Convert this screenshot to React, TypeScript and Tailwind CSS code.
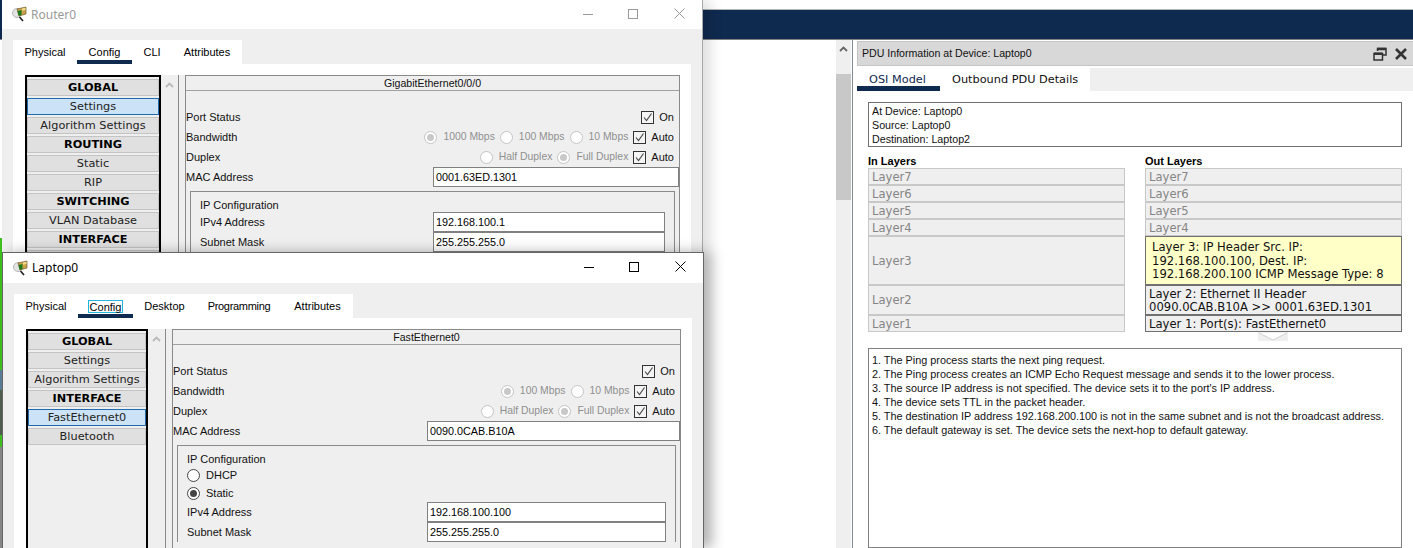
import type { ReactNode } from 'react';

const tahoma = "font-['Liberation_Sans',sans-serif]";
const verdana = "font-['DejaVu_Sans',sans-serif]";

interface TabItem {
  label: string;
  width: string;
  active?: boolean;
}

interface SideItem {
  label: string;
  head?: boolean;
  selected?: boolean;
}

const routerTabs: TabItem[] = [
  { label: 'Physical', width: 'w-[64px]' },
  { label: 'Config', width: 'w-[55px]', active: true },
  { label: 'CLI', width: 'w-[40px]' },
  { label: 'Attributes', width: 'w-[70px]' },
];

const laptopTabs: TabItem[] = [
  { label: 'Physical', width: 'w-[64px]' },
  { label: 'Config', width: 'w-[55px]', active: true },
  { label: 'Desktop', width: 'w-[63px]' },
  { label: 'Programming', width: 'w-[86px] tracking-[-0.3px]' },
  { label: 'Attributes', width: 'w-[71px]' },
];

const routerSide: SideItem[] = [
  { label: 'GLOBAL', head: true },
  { label: 'Settings', selected: true },
  { label: 'Algorithm Settings' },
  { label: 'ROUTING', head: true },
  { label: 'Static' },
  { label: 'RIP' },
  { label: 'SWITCHING', head: true },
  { label: 'VLAN Database' },
  { label: 'INTERFACE', head: true },
  { label: '' }, // next row is hidden behind the laptop window
];

const laptopSide: SideItem[] = [
  { label: 'GLOBAL', head: true },
  { label: 'Settings' },
  { label: 'Algorithm Settings' },
  { label: 'INTERFACE', head: true },
  { label: 'FastEthernet0', selected: true },
  { label: 'Bluetooth' },
];

const DeviceIcon = () => (
  <svg width="17" height="17" viewBox="0 0 17 17">
    <circle cx="6" cy="7" r="4.5" fill="#e4e4e4" stroke="#b8b8b8" />
    <path d="M8.5 11 L12 15" stroke="#222" strokeWidth="1.6" />
    <path d="M6 3 L15 1 V8 L8 10 Z" fill="#c9a24a" stroke="#5c4a1e" strokeWidth="0.6" />
    <path d="M6.5 5 L10.5 4 V9 L7.5 9.8 Z" fill="#1d7a1d" />
    <path d="M11 2.5 L14.5 1.8 V4 L11 4.8 Z" fill="#efd98a" />
  </svg>
);

const Chevron = () => (
  <svg width="9" height="6" viewBox="0 0 9 6" className="block">
    <path d="M1 5 L4.5 1.5 L8 5" fill="none" stroke="#b9b9b9" strokeWidth="1.8" />
  </svg>
);

const CheckBox = ({ className = '' }: { className?: string }) => (
  <span className={`flex h-[13px] w-[13px] items-center justify-center border border-[#333] bg-[#f4f4f4] ${className}`}>
    <svg width="11" height="11" viewBox="0 0 11 11">
      <path d="M2 5.5 L4.5 8.5 L9.5 1.5" fill="none" stroke="#444" strokeWidth="1.1" />
    </svg>
  </span>
);

const Radio = ({ on, disabled, className = '' }: { on?: boolean; disabled?: boolean; className?: string }) => (
  <span
    className={`flex h-[13px] w-[13px] items-center justify-center rounded-full border bg-white ${
      disabled ? 'border-[#c4c4c4]' : 'border-[#444]'
    } ${className}`}
  >
    {on && <span className={`h-[7px] w-[7px] rounded-full ${disabled ? 'bg-[#c8c8c8]' : 'bg-[#444]'}`} />}
  </span>
);

const Muted = ({ children, className = '' }: { children: ReactNode; className?: string }) => (
  <span className={`text-[10.4px] text-[#8f8f8f] ${className}`}>{children}</span>
);

const TextField = ({ value, className }: { value: string; className: string }) => (
  <div className={`flex items-center border border-[#808080] bg-white pl-[2px] text-[10.8px] text-black ${className}`}>
    {value}
  </div>
);

const Row = ({ label, children }: { label: string; children?: ReactNode }) => (
  <div className="flex h-[20px] items-center justify-between">
    <span>{label}</span>
    {children}
  </div>
);

interface WindowProps {
  title: string;
  inactive?: boolean;
  tabs: TabItem[];
  side: SideItem[];
  sideWidth: string;
  panelTitle: string;
  panelWidth: string;
  headerHeight: string;
  frame: string;
  children: ReactNode;
}

const DeviceWindow = ({
  title,
  inactive,
  tabs,
  side,
  sideWidth,
  panelTitle,
  panelWidth,
  headerHeight,
  frame,
  children,
}: WindowProps) => (
  <section className={`absolute flex flex-col overflow-hidden bg-[#efefef] ${frame}`}>
    <header className={`flex shrink-0 items-center justify-between bg-white pb-[2px] pl-[9px] ${headerHeight}`}>
      <div className="mt-[2px] flex items-center gap-[3px]">
        <DeviceIcon />
        <span className={`font-['Noto_Sans',sans-serif] text-[12px] ${inactive ? 'text-[#999]' : 'text-black'}`}>{title}</span>
      </div>
      <div className={`flex items-center ${inactive ? 'text-[#999]' : 'text-black'}`}>
        <svg width="45" height="12" viewBox="0 0 45 12">
          <path d="M0 6.5 H10" stroke="currentColor" />
        </svg>
        <svg width="46" height="12" viewBox="0 0 46 12">
          <rect x="0.5" y="1.5" width="9" height="9" fill="none" stroke="currentColor" />
        </svg>
        <svg width="28" height="12" viewBox="0 0 28 12">
          <path d="M0.5 0.5 L10.5 10.5 M10.5 0.5 L0.5 10.5" stroke="currentColor" />
        </svg>
      </div>
    </header>
    <div className="flex min-h-0 flex-1 flex-col px-[11px] pt-[11px]">
      <nav className="flex h-[24px] shrink-0">
        {tabs.map((tab) => (
          <div
            key={tab.label}
            className={`relative flex justify-center bg-white pt-[6px] text-[11px] text-black ${tahoma} ${tab.width}`}
          >
            <span
              className={`h-[13px] leading-[12px] ${
                !inactive && tab.active ? 'border border-[#22b5e0] px-[1px]' : ''
              }`}
            >
              {tab.label}
            </span>
            {tab.active && <span className="absolute inset-x-0 bottom-0 h-[4px] bg-[#0f2a4f]" />}
          </div>
        ))}
      </nav>
      <div className="min-h-0 flex-1 bg-white px-[12px] pt-[11px]">
        <div className={`flex h-full gap-[6px] bg-[#efefef] ${tahoma}`}>
          <div className="flex shrink-0">
            <div className={`flex flex-col gap-[2px] border-x-2 border-t-2 border-x-black border-t-black bg-[#efefef] pt-[2px] ${verdana} ${sideWidth}`}>
              {side.map((item, index) => (
                <div
                  key={item.label + index}
                  className={`flex h-[17px] shrink-0 items-center justify-center border text-[11.3px] leading-none text-[#222] ${
                    item.selected ? 'border-[#1f6bad] bg-[#cce2f6]' : 'border-[#c4c4c4] bg-[#e0e0e0]'
                  } ${item.head ? 'font-bold text-black' : ''}`}
                >
                  {item.label}
                </div>
              ))}
            </div>
            <div className="flex w-[18px] justify-center border-r border-[#8a8a8a] bg-[#efefef] pt-[7px]">
              <Chevron />
            </div>
          </div>
          <div className={`flex shrink-0 flex-col border-x border-t border-[#8a8a8a] text-[11px] text-[#111] ${panelWidth}`}>
            <div className="flex h-[15px] shrink-0 items-center justify-center border-b border-[#a0a0a0] pt-px text-[10.6px]">
              {panelTitle}
            </div>
            {children}
          </div>
        </div>
      </div>
    </div>
  </section>
);

const RouterForm = () => (
  <div className="flex flex-col pt-[16px]">
    <Row label="Port Status">
      <div className="flex items-center gap-[5px] pr-[5px]">
        <CheckBox />
        <span>On</span>
      </div>
    </Row>
    <Row label="Bandwidth">
      <div className="flex items-center pr-[5px]">
        <Radio on disabled />
        <Muted className="ml-[6px]">1000 Mbps</Muted>
        <Radio disabled className="ml-[5px]" />
        <Muted className="ml-[6px]">100 Mbps</Muted>
        <Radio disabled className="ml-[5px]" />
        <Muted className="ml-[6px]">10 Mbps</Muted>
        <CheckBox className="ml-[5px]" />
        <span className="ml-[5px]">Auto</span>
      </div>
    </Row>
    <Row label="Duplex">
      <div className="flex items-center pr-[5px]">
        <Radio disabled />
        <Muted className="ml-[6px]">Half Duplex</Muted>
        <Radio on disabled className="ml-[5px]" />
        <Muted className="ml-[6px]">Full Duplex</Muted>
        <CheckBox className="ml-[5px]" />
        <span className="ml-[5px]">Auto</span>
      </div>
    </Row>
    <Row label="MAC Address">
      <TextField value="0001.63ED.1301" className="h-[20px] w-[246px]" />
    </Row>
    <div className="mx-[4px] mt-[4px] border-x border-t border-[#8a8a8a] px-[9px] pt-[6px]">
      <div className="flex h-[14px] items-center">IP Configuration</div>
      <div className="flex h-[20px] items-center justify-between">
        <span>IPv4 Address</span>
        <TextField value="192.168.100.1" className="h-[20px] w-[232px]" />
      </div>
      <div className="flex h-[20px] items-center justify-between">
        <span>Subnet Mask</span>
        <TextField value="255.255.255.0" className="h-[20px] w-[232px]" />
      </div>
    </div>
  </div>
);

const LaptopForm = () => (
  <div className="flex flex-col pt-[16px]">
    <Row label="Port Status">
      <div className="flex items-center gap-[5px] pr-[5px]">
        <CheckBox />
        <span>On</span>
      </div>
    </Row>
    <Row label="Bandwidth">
      <div className="flex items-center pr-[5px]">
        <Radio on disabled />
        <Muted className="ml-[6px]">100 Mbps</Muted>
        <Radio disabled className="ml-[5px]" />
        <Muted className="ml-[6px]">10 Mbps</Muted>
        <CheckBox className="ml-[5px]" />
        <span className="ml-[5px]">Auto</span>
      </div>
    </Row>
    <Row label="Duplex">
      <div className="flex items-center pr-[5px]">
        <Radio disabled />
        <Muted className="ml-[6px]">Half Duplex</Muted>
        <Radio on disabled className="ml-[5px]" />
        <Muted className="ml-[6px]">Full Duplex</Muted>
        <CheckBox className="ml-[5px]" />
        <span className="ml-[5px]">Auto</span>
      </div>
    </Row>
    <Row label="MAC Address">
      <TextField value="0090.0CAB.B10A" className="h-[20px] w-[253px]" />
    </Row>
    <div className="mx-[4px] mt-[4px] border-x border-t border-[#8a8a8a] px-[9px] pt-[6px]">
      <div className="flex h-[14px] items-center">IP Configuration</div>
      <div className="flex h-[18px] items-center gap-[6px]">
        <Radio />
        <span>DHCP</span>
      </div>
      <div className="flex h-[18px] items-center gap-[6px]">
        <Radio on />
        <span>Static</span>
      </div>
      <div className="flex h-[20px] items-center justify-between">
        <span>IPv4 Address</span>
        <TextField value="192.168.100.100" className="h-[20px] w-[239px]" />
      </div>
      <div className="flex h-[20px] items-center justify-between">
        <span>Subnet Mask</span>
        <TextField value="255.255.255.0" className="h-[20px] w-[239px]" />
      </div>
    </div>
  </div>
);

const LayerCell = ({ height, children, active, yellow }: { height: string; children: ReactNode; active?: boolean; yellow?: boolean }) => (
  <div
    className={`flex shrink-0 items-center border pt-[2px] leading-[13.5px] ${height} ${
      yellow
        ? 'border-[#707070] bg-[#ffffc8] px-[6px] text-[#111]'
        : active
          ? 'border-[#707070] bg-[#efefef] px-[3px] text-[#111]'
          : 'border-[#c8c8c8] bg-[#efefef] px-[3px] text-[#858585]'
    }`}
  >
    <div>{children}</div>
  </div>
);

const inactiveUpper = ['Layer7', 'Layer6', 'Layer5', 'Layer4'];

const LayerColumn = ({ title, children }: { title: string; children: ReactNode }) => (
  <div className="flex w-[257px] flex-col">
    <div className={`h-[14px] text-[11px] font-bold leading-[14px] text-black ${tahoma}`}>{title}</div>
    <div className={`flex flex-col text-[11.6px] ${verdana}`}>
      {inactiveUpper.map((name) => (
        <LayerCell key={name} height="h-[17px]">
          {name}
        </LayerCell>
      ))}
      {children}
    </div>
  </div>
);

const PduPanel = () => (
  <aside className="flex min-w-0 flex-1 flex-col pl-[4px] pt-px">
    <div className={`flex h-[25px] shrink-0 items-center justify-between border-y border-l border-[#c4c4c4] bg-[#d8d8d8] pl-[4px] pr-[5px] text-[#111] ${tahoma}`}>
      <span className="pt-px text-[10.6px]">PDU Information at Device: Laptop0</span>
      <div className="flex items-center gap-[7px]">
        <svg width="14" height="14" viewBox="0 0 14 14">
          <path d="M4.5 4 V1.5 H13 V8 H10 M1 6.5 H9.5 V13 H1 Z" fill="none" stroke="#333" strokeWidth="1.5" />
          <path d="M4 2 H13 M1 6.8 H9.5" stroke="#333" strokeWidth="2.4" />
        </svg>
        <svg width="14" height="14" viewBox="0 0 14 14">
          <path d="M2 2 L12 12 M12 2 L2 12" stroke="#333" strokeWidth="2.6" />
        </svg>
      </div>
    </div>
    <div className="flex min-h-0 flex-1 flex-col bg-white">
      <div className={`mt-[2px] flex h-[23px] shrink-0 bg-[#efefef] text-[11.3px] text-[#111] ${verdana}`}>
        <div className="relative w-[83px] bg-white pl-[12px] pt-[4px] text-[#0f2a4f]">
          OSI Model
          <span className="absolute inset-x-0 bottom-0 h-[5px] bg-[#0f2a4f]" />
        </div>
        <div className="w-[150px] bg-white pl-[12px] pt-[4px]">Outbound PDU Details</div>
      </div>
      <div className="flex min-h-0 flex-1 flex-col pl-[11px] pr-[11px] pt-[11px]">
        <div className={`h-[45px] shrink-0 border border-[#707070] px-[3px] py-[1px] text-[10.7px] leading-[14px] text-[#111] ${tahoma}`}>
          <div>At Device: Laptop0</div>
          <div>Source: Laptop0</div>
          <div>Destination: Laptop2</div>
        </div>
        <div className="mt-[7px] flex shrink-0 justify-between">
          <LayerColumn title="In Layers">
            <LayerCell height="h-[49px]">Layer3</LayerCell>
            <LayerCell height="h-[30px]">Layer2</LayerCell>
            <LayerCell height="h-[17px]">Layer1</LayerCell>
          </LayerColumn>
          <LayerColumn title="Out Layers">
            <LayerCell height="h-[49px]" yellow>
              Layer 3: IP Header Src. IP:
              <br />
              192.168.100.100, Dest. IP:
              <br />
              192.168.200.100 ICMP Message Type: 8
            </LayerCell>
            <LayerCell height="h-[30px]" active>
              Layer 2: Ethernet II Header
              <br />
              0090.0CAB.B10A &gt;&gt; 0001.63ED.1301
            </LayerCell>
            <LayerCell height="h-[17px]" active>
              Layer 1: Port(s): FastEthernet0
            </LayerCell>
          </LayerColumn>
        </div>
        <div className="flex h-[16px] shrink-0 justify-end pr-[114px]">
          <svg width="30" height="10" viewBox="0 0 30 10">
            <rect width="30" height="9" fill="#efefef" />
            <path d="M1 1 L15 8 L29 1" fill="#fff" stroke="#d0d0d0" />
          </svg>
        </div>
        <div className={`min-h-0 flex-1 border border-[#808080] px-[3px] pt-[4px] text-[10.85px] leading-[14px] text-[#111] ${tahoma}`}>
          <div>1. The Ping process starts the next ping request.</div>
          <div>2. The Ping process creates an ICMP Echo Request message and sends it to the lower process.</div>
          <div>3. The source IP address is not specified. The device sets it to the port's IP address.</div>
          <div>4. The device sets TTL in the packet header.</div>
          <div>5. The destination IP address 192.168.200.100 is not in the same subnet and is not the broadcast address.</div>
          <div>6. The default gateway is set. The device sets the next-hop to default gateway.</div>
        </div>
      </div>
    </div>
  </aside>
);

export default function App() {
  return (
    <div className="relative flex h-[548px] w-[1413px] flex-col overflow-hidden bg-white">
      {/* canvas behind the windows */}
      <div className="h-[10px] shrink-0 border-b border-[#b4b4b4] bg-white" />
      <div className="h-[30px] shrink-0 border-b border-[#808080] bg-[#0f2a4f]" />
      <div className="flex min-h-0 flex-1 pl-[836px]">
        <div className="flex w-[15px] shrink-0 flex-col items-center bg-[#efefef] pt-[6px]">
          <svg width="9" height="6" viewBox="0 0 9 6" className="block">
            <path d="M1 5 L4.5 1.5 L8 5" fill="none" stroke="#666" strokeWidth="1.8" />
          </svg>
          <div className="mt-[22px] h-[126px] w-full bg-[#c8c8c8]" />
        </div>
        <div className="ml-px w-px shrink-0 bg-[#808890]" />
        <PduPanel />
      </div>

      {/* desktop sliver left of the windows */}
      <div className="absolute left-0 top-0 h-[30px] w-[2px] bg-[#0f2a4f]" />
      <div className="absolute left-0 top-[238px] h-[310px] w-[2px] bg-[#3fc31f]" />
      <div className="absolute left-0 top-[370px] h-[20px] w-[2px] bg-[#5b7f98]" />
      <div className="absolute left-0 top-[390px] h-[45px] w-[2px] bg-[#50604f]" />
      <div className="absolute left-0 top-[447px] h-[101px] w-[2px] bg-[#8a8a8a]" />

      <DeviceWindow
        title="Router0"
        inactive
        tabs={routerTabs}
        side={routerSide}
        sideWidth="w-[136px]"
        panelTitle="GigabitEthernet0/0/0"
        panelWidth="w-[495px]"
        headerHeight="h-[29px]"
        frame="left-[2px] top-0 h-[253px] w-[701px] border-r border-[#a8a8a8] shadow-[8px_0_12px_rgba(0,0,0,0.12)]"
      >
        <RouterForm />
      </DeviceWindow>

      <DeviceWindow
        title="Laptop0"
        tabs={laptopTabs}
        side={laptopSide}
        sideWidth="w-[122px]"
        panelTitle="FastEthernet0"
        panelWidth="w-[509px]"
        headerHeight="h-[30px]"
        frame="left-[2px] top-[252px] h-[296px] w-[702px] border-x border-t border-[#666] shadow-[8px_0_12px_rgba(0,0,0,0.3)]"
      >
        <LaptopForm />
      </DeviceWindow>
    </div>
  );
}
